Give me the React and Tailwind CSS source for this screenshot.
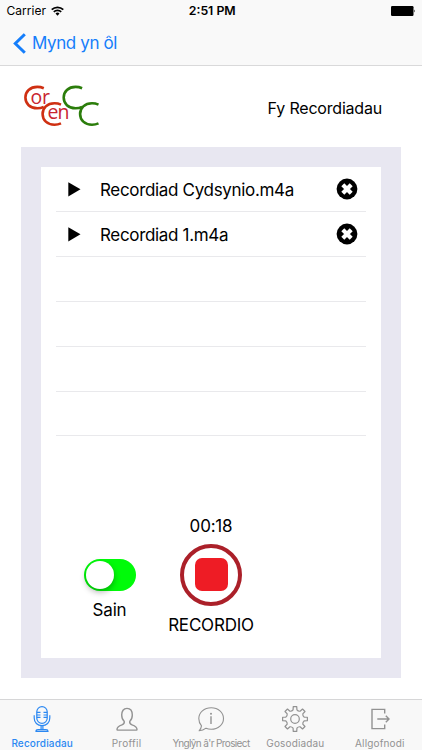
import { clsx } from 'clsx';

const recordings = ['Recordiad Cydsynio.m4a', 'Recordiad 1.m4a', null, null, null, null];

const tabs = [
  { label: 'Recordiadau', icon: MicIcon, active: true, spacing: 'tracking-[0.15px]' },
  { label: 'Proffil', icon: PersonIcon, spacing: 'tracking-[0.3px]' },
  { label: "Ynglŷn â'r Prosiect", icon: InfoIcon, spacing: 'tracking-[-0.62px]' },
  { label: 'Gosodiadau', icon: GearIcon, spacing: 'tracking-[0.15px]' },
  { label: 'Allgofnodi', icon: LogoutIcon, spacing: 'tracking-[0.15px]' },
];

function MicIcon() {
  return (
    <svg width="30" height="30" viewBox="0 0 30 30" fill="none" stroke="currentColor" strokeWidth="1.2">
      <rect x="9.8" y="2.6" width="10.4" height="16.8" rx="5.2" />
      <path d="M9.8 8.4h3.7M9.8 11h3.7M9.8 13.4h3.7M16.5 8.4h3.7M16.5 11h3.7M16.5 13.4h3.7" />
      <path d="M7.2 11.3v2.6c0 4.6 3.2 7.8 7.8 7.8s7.8-3.2 7.8-7.8v-2.6" />
      <path d="M14.1 21.7v4M15.9 21.7v4" />
      <path d="M9 27.3c0-1.2.8-1.7 2-1.7h8c1.2 0 2 .5 2 1.7z" />
    </svg>
  );
}

function PersonIcon() {
  return (
    <svg width="30" height="30" viewBox="0 0 30 30" fill="none" stroke="currentColor" strokeWidth="1.4" strokeLinejoin="round">
      <path d="M12.2 17.2c-1.7-1.3-2.5-3.4-2.5-6.1 0-4.1 1.8-6.7 5.3-6.7s5.3 2.6 5.3 6.7c0 2.7-.8 4.8-2.5 6.1-.5 2.2.3 3 2.2 3.6 3.2 1 5 1.8 5 4.7 0 .4-.2.6-.6.6H5.6c-.4 0-.6-.2-.6-.6 0-2.9 1.8-3.7 5-4.7 1.9-.6 2.7-1.4 2.2-3.6z" />
    </svg>
  );
}

function InfoIcon() {
  return (
    <svg width="30" height="30" viewBox="0 0 30 30" fill="none" stroke="currentColor" strokeWidth="1.1" strokeLinejoin="round">
      <path d="M15.2 3.7c7 0 12.3 4.7 12.3 10.7s-5.3 10.9-12.3 10.9c-2 0-3.7-.4-5.2-1.1-1.8 1.5-4.1 2.5-6.9 2.6 1.4-1.5 2.2-3 2.4-4.9-1.7-2-2.7-4.5-2.7-7.5 0-6 5.4-10.7 12.4-10.7z" />
      <path d="M15 12.2v7.9" strokeWidth="1.4" />
      <circle cx="15" cy="9.7" r="1" fill="currentColor" stroke="none" />
    </svg>
  );
}

const gearTeeth = Array.from({ length: 8 }, (_, i) => i * 45);

function gearPath() {
  const at = (radius, degrees) => {
    const a = (degrees * Math.PI) / 180;
    return `${(15 + radius * Math.sin(a)).toFixed(2)} ${(15 - radius * Math.cos(a)).toFixed(2)}`;
  };
  const points = gearTeeth.map(
    (t) => `${at(9.3, t - 12)} L${at(12.5, t - 8)} L${at(12.5, t + 8)} L${at(9.3, t + 12)} Q${at(8.2, t + 22.5)} ${at(9.3, t + 33)}`
  );
  return `M${points.join(' L')}Z`;
}

function GearIcon() {
  return (
    <svg width="30" height="30" viewBox="0 0 30 30" fill="none" stroke="currentColor" strokeWidth="1.2" strokeLinejoin="round">
      <path d={gearPath()} />
      <circle cx="15" cy="15" r="4.3" />
    </svg>
  );
}

function LogoutIcon() {
  return (
    <svg width="30" height="30" viewBox="0 0 30 30" fill="none" stroke="currentColor" strokeWidth="1.4">
      <path d="M19.7 9.5V5.4H7v19.2h12.7v-4.2" />
      <path d="M12.3 15h11.5M20.8 11.8l3.2 3.2-3.2 3.2" />
    </svg>
  );
}

const LETTER_C =
  'M19.8 3.2C17.7 2.3 15.6 1.9 13.3 1.9 6 1.9 1.4 6.5 1.4 12.6S6 23.3 13.3 23.3c2.3 0 4.4-.4 6.5-1.3';

function Logo() {
  return (
    <svg className="-mt-[8px] overflow-visible" width="78" height="52" viewBox="0 -8 78 52" fill="none" strokeWidth="2.6">
      <g stroke="#cf3012">
        <path d={LETTER_C} />
        <path d={LETTER_C} transform="translate(17.2 16.4)" />
      </g>
      <g stroke="#2b7d0b">
        <path d={LETTER_C} transform="translate(38.3 0)" />
        <path d={LETTER_C} transform="translate(54.7 16.4)" />
      </g>
      <g fill="#c9252f" className="font-['Open_Sans',sans-serif] text-[19.5px]">
        <text x="6.5" y="18.7" textLength="19.5">or</text>
        <text x="23.5" y="34.2" textLength="22">en</text>
      </g>
    </svg>
  );
}

function StatusBar() {
  return (
    <div className="grid h-[22px] grid-cols-3 items-center pr-[6px] pl-[6.5px] text-black">
      <div className="flex items-center gap-[5px]">
        <span className="text-[12px] tracking-[0.05px]">Carrier</span>
        <svg width="13" height="10" viewBox="0 0 13 10" fill="none" stroke="black" strokeWidth="1.7">
          <path d="M.7 3.7a8.2 8.2 0 0 1 11.6 0" />
          <path d="M2.8 5.9a5.2 5.2 0 0 1 7.4 0" />
          <path d="M6.5 9.7 4.5 7.6a2.8 2.8 0 0 1 4 0z" fill="black" stroke="none" />
        </svg>
      </div>
      <span className="pl-[2px] text-center text-[12.3px] font-semibold">2:51 PM</span>
      <svg className="justify-self-end" width="25" height="10" viewBox="0 0 25 10">
        <rect width="22.5" height="10" rx="1.2" />
        <path d="M23.3 3.5q1.5 1.5 0 3z" />
      </svg>
    </div>
  );
}

function RecordingRow({ name }) {
  return (
    <li className="flex h-[44.8px] items-center border-b border-[#e9e9ec] pr-[8px] pl-[11.5px]">
      {name && (
        <>
          <svg width="13" height="15" viewBox="0 0 13 15">
            <path d="M.3.3 12.5 7.3.3 14.5z" />
          </svg>
          <span className="ml-[19.5px] flex-1 pt-[2px] text-[17px] tracking-[-0.33px]">{name}</span>
          <svg width="22" height="22" viewBox="0 0 22 22">
            <circle cx="11" cy="11" r="10.4" />
            <path d="m6.8 6.8 8.4 8.4M15.2 6.8l-8.4 8.4" stroke="white" strokeWidth="4.2" />
          </svg>
        </>
      )}
    </li>
  );
}

function Toggle() {
  return (
    <div className="flex h-8 w-[52px] items-center rounded-full bg-[#00fb09] pl-[2px]">
      <div className="size-[28px] rounded-full bg-white shadow-[0_3px_6px_rgba(0,0,0,0.3)]" />
    </div>
  );
}

export default function App() {
  return (
    <div className="flex h-[750px] w-[422px] flex-col overflow-hidden bg-white font-['Inter',sans-serif] text-black">
      <header className="h-[66px] border-b border-[#d9d9da] bg-[#f9f9f9]">
        <StatusBar />
        <div className="flex h-[43px] items-center gap-[6px] pl-[13px] text-[#157efb]">
          <svg width="13" height="21" viewBox="0 0 13 21" fill="none" stroke="currentColor" strokeWidth="3">
            <path d="M11.8 1.2 2.3 10.5l9.5 9.3" />
          </svg>
          <span className="pt-px text-[17px] tracking-[-0.4px]">Mynd yn ôl</span>
        </div>
      </header>

      <div className="flex h-[81px] items-center justify-between pr-[40px] pl-[24px]">
        <Logo />
        <h1 className="pt-[3px] text-[16px] tracking-[-0.2px]">Fy Recordiadau</h1>
      </div>

      <main className="ml-[21px] h-[531px] w-[380px] bg-[#e8e7f1] p-5">
        <div className="flex h-[491px] flex-col bg-white px-[15px]">
          <ul className="pt-[0.6px]">
            {recordings.map((name, i) => (
              <RecordingRow key={i} name={name} />
            ))}
          </ul>
          <div className="mt-[77.6px] grid grid-cols-[107px_96px] text-[17px]">
            <div className="flex flex-col items-center pt-[45px]">
              <Toggle />
              <span className="mt-[7px] leading-6 tracking-[-0.2px]">Sain</span>
            </div>
            <div className="flex flex-col items-center">
              <span className="leading-6 tracking-[-0.2px]">00:18</span>
              <div className="mt-[6px] flex size-[62px] items-center justify-center rounded-full border-4 border-[#ab2029]">
                <div className="size-[33px] rounded-[7px] bg-[#ee1c25]" />
              </div>
              <span className="mt-[7px] leading-6 tracking-[-0.2px]">RECORDIO</span>
            </div>
          </div>
        </div>
      </main>

      <nav className="mt-auto grid h-[51px] grid-cols-5 border-t border-[#d6d6d7] bg-[#f8f8f8]">
        {tabs.map(({ label, icon: Icon, active, spacing }) => (
          <div
            key={label}
            className={clsx('flex flex-col items-center pt-[4px]', active ? 'text-[#2b88f2]' : 'text-[#929292]')}
          >
            <Icon />
            <span className={clsx('mt-[2px] text-[10px] leading-[15px] whitespace-nowrap', active && 'font-medium', spacing)}>
              {label}
            </span>
          </div>
        ))}
      </nav>
    </div>
  );
}
